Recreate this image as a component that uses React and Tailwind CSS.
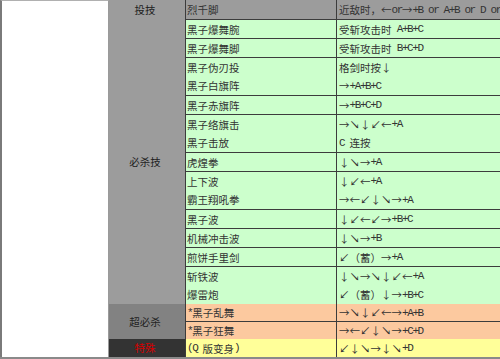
const rows = [
  { name: '烈千脚', cmd: '近敌时，←or→+B or A+B or D or C', bg: 'bg-[#9c9c9c]', top: false, h: 'h-[19px]' },
  { name: '黑子爆舞腕', cmd: '受斩攻击时 A+B+C', bg: 'bg-[#ccffcc]', top: true, h: 'h-[19px]' },
  { name: '黑子爆舞脚', cmd: '受斩攻击时 B+C+D', bg: 'bg-[#ccffcc]', top: true, h: 'h-[19px]' },
  { name: '黑子伪刃投', cmd: '格剑时按↓', bg: 'bg-[#ccffcc]', top: true, h: 'h-[19px]' },
  { name: '黑子白旗阵', cmd: '→+A+B+C', bg: 'bg-[#ccffcc]', top: false, h: 'h-[19px]' },
  { name: '黑子赤旗阵', cmd: '→+B+C+D', bg: 'bg-[#ccffcc]', top: true, h: 'h-[19px]' },
  { name: '黑子络旗击', cmd: '→↘↓↙←+A', bg: 'bg-[#ccffcc]', top: true, h: 'h-[19px]' },
  { name: '黑子击放', cmd: 'C 连按', bg: 'bg-[#ccffcc]', top: false, h: 'h-[19px]' },
  { name: '虎煌拳', cmd: '↓↘→+A', bg: 'bg-[#ccffcc]', top: true, h: 'h-[19px]' },
  { name: '上下波', cmd: '↓↙←+A', bg: 'bg-[#ccffcc]', top: true, h: 'h-[19px]' },
  { name: '霸王翔吼拳', cmd: '→←↙↓↘→+A', bg: 'bg-[#ccffcc]', top: false, h: 'h-[19px]' },
  { name: '黑子波', cmd: '↓↙←↙→+B+C', bg: 'bg-[#ccffcc]', top: true, h: 'h-[19px]' },
  { name: '机械冲击波', cmd: '↓↘→+B', bg: 'bg-[#ccffcc]', top: true, h: 'h-[19px]' },
  { name: '煎饼手里剑', cmd: '↙（蓄）→+A', bg: 'bg-[#ccffcc]', top: true, h: 'h-[19px]' },
  { name: '斩铁波', cmd: '↓↘→↘↓↙←+A', bg: 'bg-[#ccffcc]', top: true, h: 'h-[19px]' },
  { name: '爆雷炮', cmd: '↙（蓄）↓→+B+C', bg: 'bg-[#ccffcc]', top: false, h: 'h-[19px]' },
  { name: '*黑子乱舞', cmd: '→↘↓↙←→+A+B', bg: 'bg-[#fcc99f]', top: false, h: 'h-[17px]' },
  { name: '*黑子狂舞', cmd: '→←↙↓↘→+C+D', bg: 'bg-[#fcc99f]', top: true, h: 'h-[18px]' },
  { name: '(Q 版变身)', cmd: '↙↓↘→↓↘+D', bg: 'bg-[#ffff99]', top: false, h: 'h-[18px]' },
];

// split into half-width (ascii) and full-width runs, like SimSun would draw them
function Runs({ text }) {
  const parts = text.match(/[\x20-\x7e]+|[^\x20-\x7e]+/g) || [];
  return parts.map((p, i) =>
    /^[\x20-\x7e]+$/.test(p) ? (
      <span key={i} className="font-['Liberation_Mono',monospace] text-[11px] tracking-[-1.4px] whitespace-pre">
        {p}
      </span>
    ) : (
      <span key={i} className="font-['Noto_Sans_CJK_SC',sans-serif] text-[10.5px]">
        {p}
      </span>
    )
  );
}

function Cell({ row, text, wide }) {
  return (
    <div
      className={`${row.h} ${row.bg} ${row.top ? 'border-t' : ''} border-l border-[#3c3c3c] flex items-center pt-[1px] ${wide ? 'pl-[2px]' : 'pl-[1px]'} whitespace-nowrap overflow-hidden text-[#333]`}
    >
      <Runs text={text} />
    </div>
  );
}

export default function App() {
  return (
    <div className="w-[500px] h-[359px] overflow-hidden flex bg-white border-b-2 border-[#8a8a8a] font-['Noto_Sans_CJK_SC',sans-serif]">
      <div className="w-[109px] shrink-0 bg-white border-l-2 border-l-[#7a7a7a] border-t border-t-[#b0b0b0] border-r border-r-[#9a9a9a]" />
      <div className="grid grid-cols-[76px_151px_1fr] flex-1 content-start">
        <div className="bg-[#9c9c9c] flex items-center justify-center text-[10.5px] text-[#222] h-[19px] pr-[4px]">投技</div>
        <Cell row={rows[0]} text={rows[0].name} />
        <Cell row={rows[0]} text={rows[0].cmd} wide />

        <div className="row-span-15 bg-[#9c9c9c] flex items-center justify-center text-[10.5px] text-[#222] pr-[4px]">必杀技</div>
        {rows.slice(1, 16).map((r) => [
          <Cell key={r.name + 'n'} row={r} text={r.name} />,
          <Cell key={r.name + 'c'} row={r} text={r.cmd} wide />,
        ])}

        <div className="row-span-2 bg-[#828282] flex items-center justify-center text-[10.5px] text-[#222] pr-[4px]">超必杀</div>
        {rows.slice(16, 18).map((r) => [
          <Cell key={r.name + 'n'} row={r} text={r.name} />,
          <Cell key={r.name + 'c'} row={r} text={r.cmd} wide />,
        ])}

        <div className="bg-[#333333] flex items-center justify-center text-[10.5px] text-[#d40000] pr-[4px]">特殊</div>
        <Cell row={rows[18]} text={rows[18].name} />
        <Cell row={rows[18]} text={rows[18].cmd} wide />
      </div>
    </div>
  );
}
